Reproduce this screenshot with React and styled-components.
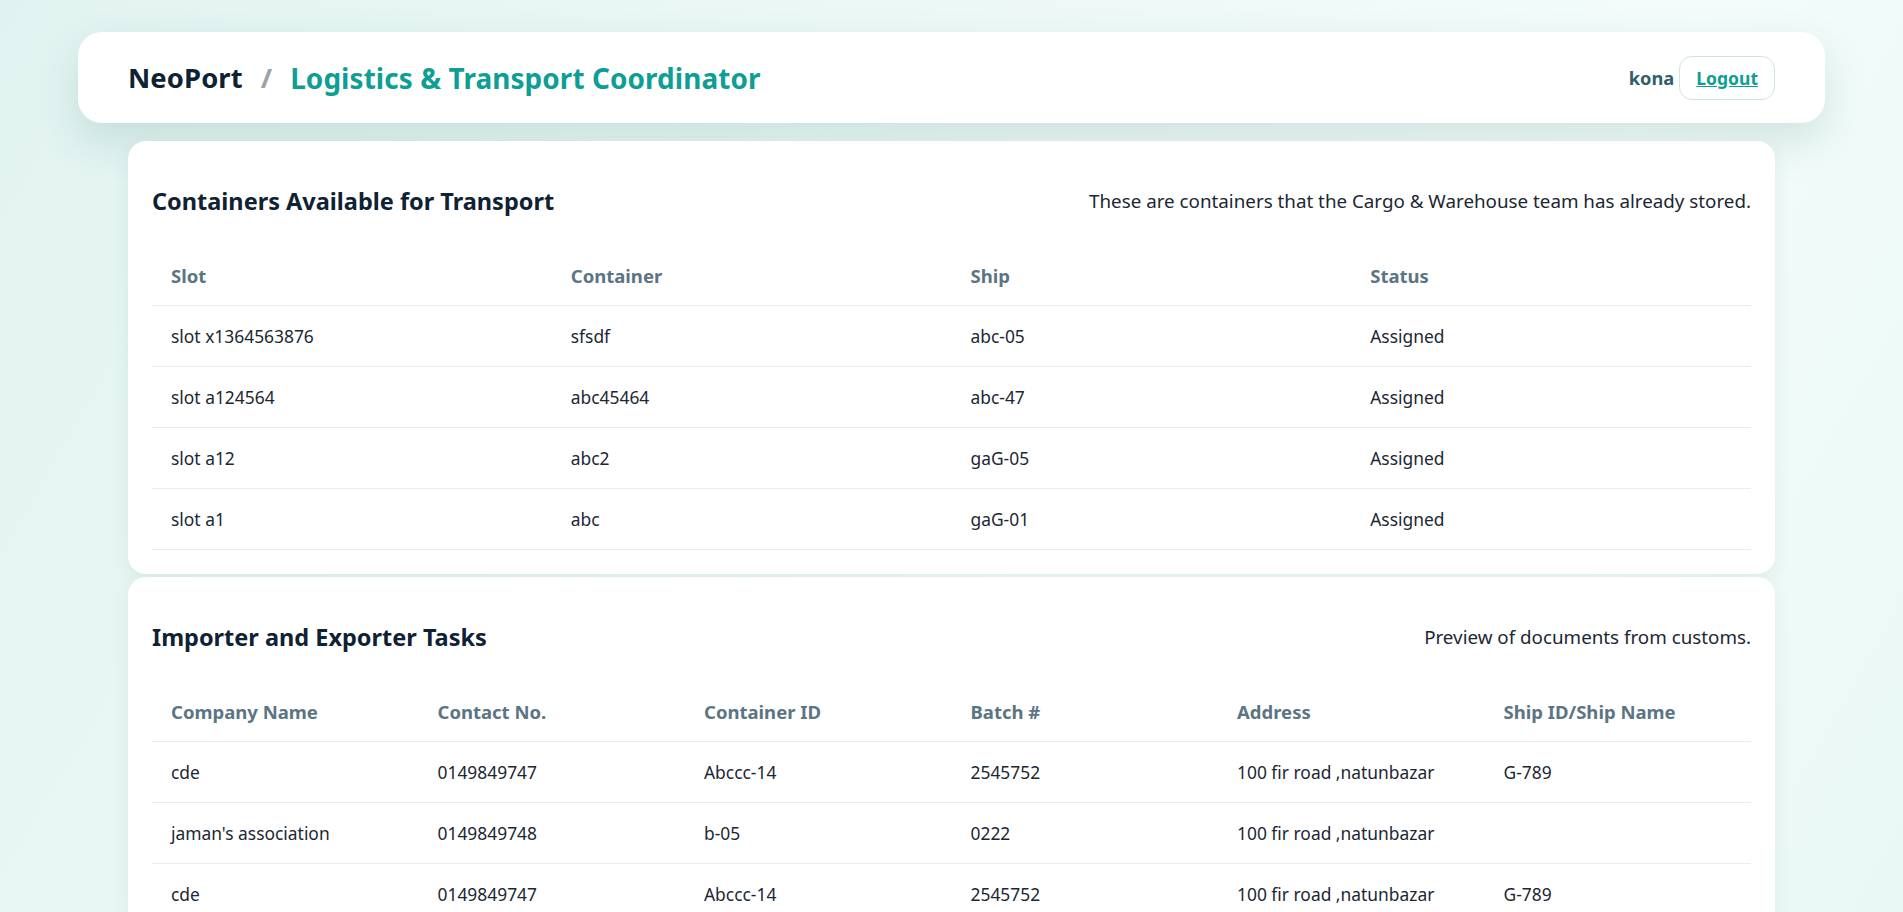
import React from "react";
import styled, { createGlobalStyle } from "styled-components";

const GlobalStyle = createGlobalStyle`
  html, body {
    margin: 0;
    padding: 0;
  }
  body {
    font-family: "Segoe UI", "Noto Sans", sans-serif;
    color: #1b2733;
    min-height: 100vh;
    background: linear-gradient(120deg, #e1f3f0 0%, #eef9f7 45%, #f3fcfa 70%, #e9f8f5 100%);
  }
`;

const Page = styled.div`
  width: calc(100% - 156px);
  margin: 0 auto;
  padding-top: 32px;
`;

const TopBar = styled.header`
  height: 91px;
  box-sizing: border-box;
  padding: 0 50px;
  display: flex;
  align-items: center;
  justify-content: space-between;
  background: #fff;
  border-radius: 24px;
  box-shadow: 0 18px 40px rgba(60, 130, 120, 0.18);
`;

const Brand = styled.h1`
  margin: 0;
  display: flex;
  align-items: center;
  gap: 18px;
  font-size: 27.4px;
  font-weight: 700;
  color: #0f2233;
  letter-spacing: 0.1px;
`;

const Slash = styled.span`
  color: #9ba3a8;
`;

const Role = styled.span`
  color: #0e9e95;
  font-size: 27.9px;
`;

const UserBox = styled.div`
  display: flex;
  align-items: center;
  gap: 5px;
`;

const UserName = styled.span`
  font-size: 18.3px;
  font-weight: 700;
  color: #2e5f6b;
`;

const LogoutButton = styled.button`
  height: 44px;
  padding: 0 16px;
  border: 1px solid #cfe3e1;
  border-radius: 13px;
  background: #fff;
  font-family: inherit;
  font-size: 17.5px;
  font-weight: 700;
  color: #0e9e95;
  text-decoration: underline;
  cursor: pointer;
`;

const Main = styled.main`
  padding: 18px 50px 0;
  display: flex;
  flex-direction: column;
  gap: 3px;
`;

const Card = styled.section`
  background: #fff;
  border-radius: 18px;
  padding: 24px;
  box-shadow: 0 6px 18px rgba(40, 90, 90, 0.08);
`;

const CardHead = styled.div`
  display: flex;
  align-items: center;
  justify-content: space-between;
  padding: 20px 0;
  margin-bottom: 8px;
  line-height: 32px;
`;

const CardTitle = styled.h2`
  margin: 0;
  font-size: 23.5px;
  font-weight: 700;
  color: #0f2233;
`;

const CardNote = styled.p`
  margin: 0;
  font-size: 18.8px;
  color: #1b2733;
`;

const Table = styled.table`
  width: 100%;
  border-collapse: collapse;
  table-layout: fixed;
`;

const Th = styled.th`
  height: 60px;
  padding: 0 19px;
  text-align: left;
  font-size: 18.5px;
  font-weight: 700;
  color: #5b7582;
  border-bottom: 1px solid #e8eeee;
  white-space: nowrap;
`;

const Td = styled.td`
  height: 60px;
  padding: 0 19px;
  font-size: 17.4px;
  color: #1b2733;
  border-bottom: 1px solid #e8eeee;
  white-space: nowrap;
`;

const containers = [
  ["slot x1364563876", "sfsdf", "abc-05", "Assigned"],
  ["slot a124564", "abc45464", "abc-47", "Assigned"],
  ["slot a12", "abc2", "gaG-05", "Assigned"],
  ["slot a1", "abc", "gaG-01", "Assigned"],
];

const tasks = [
  ["cde", "0149849747", "Abccc-14", "2545752", "100 fir road ,natunbazar", "G-789"],
  ["jaman's association", "0149849748", "b-05", "0222", "100 fir road ,natunbazar", ""],
  ["cde", "0149849747", "Abccc-14", "2545752", "100 fir road ,natunbazar", "G-789"],
];

function DataTable({ columns, rows }) {
  return (
    <Table>
      <thead>
        <tr>
          {columns.map((c) => (
            <Th key={c}>{c}</Th>
          ))}
        </tr>
      </thead>
      <tbody>
        {rows.map((r, i) => (
          <tr key={i}>
            {r.map((v, j) => (
              <Td key={j}>{v}</Td>
            ))}
          </tr>
        ))}
      </tbody>
    </Table>
  );
}

export default function App() {
  return (
    <>
      <GlobalStyle />
      <Page>
        <TopBar>
          <Brand>
            NeoPort <Slash>/</Slash> <Role>Logistics &amp; Transport Coordinator</Role>
          </Brand>
          <UserBox>
            <UserName>kona</UserName>
            <LogoutButton type="button">Logout</LogoutButton>
          </UserBox>
        </TopBar>
        <Main>
          <Card>
            <CardHead>
              <CardTitle>Containers Available for Transport</CardTitle>
              <CardNote>
                These are containers that the Cargo &amp; Warehouse team has already stored.
              </CardNote>
            </CardHead>
            <DataTable columns={["Slot", "Container", "Ship", "Status"]} rows={containers} />
          </Card>
          <Card>
            <CardHead>
              <CardTitle>Importer and Exporter Tasks</CardTitle>
              <CardNote>Preview of documents from customs.</CardNote>
            </CardHead>
            <DataTable
              columns={["Company Name", "Contact No.", "Container ID", "Batch #", "Address", "Ship ID/Ship Name"]}
              rows={tasks}
            />
          </Card>
        </Main>
      </Page>
    </>
  );
}
